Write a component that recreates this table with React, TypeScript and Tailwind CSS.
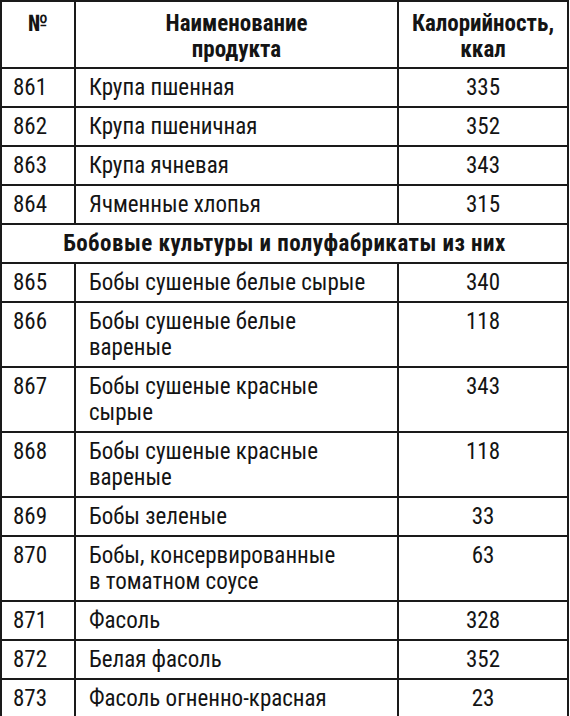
import React from "react";

type Row = { n: string; name: React.ReactNode; kcal: string } | { section: string };

const rows: Row[] = [
  { n: "861", name: "Крупа пшенная", kcal: "335" },
  { n: "862", name: "Крупа пшеничная", kcal: "352" },
  { n: "863", name: "Крупа ячневая", kcal: "343" },
  { n: "864", name: "Ячменные хлопья", kcal: "315" },
  { section: "Бобовые культуры и полуфабрикаты из них" },
  { n: "865", name: "Бобы сушеные белые сырые", kcal: "340" },
  { n: "866", name: <>Бобы сушеные белые<br />вареные</>, kcal: "118" },
  { n: "867", name: <>Бобы сушеные красные<br />сырые</>, kcal: "343" },
  { n: "868", name: <>Бобы сушеные красные<br />вареные</>, kcal: "118" },
  { n: "869", name: "Бобы зеленые", kcal: "33" },
  { n: "870", name: <>Бобы, консервированные<br />в томатном соусе</>, kcal: "63" },
  { n: "871", name: "Фасоль", kcal: "328" },
  { n: "872", name: "Белая фасоль", kcal: "352" },
  { n: "873", name: "Фасоль огненно-красная", kcal: "23" },
];

export default function App() {
  return (
    <div
      className="w-[570px] h-[716px] overflow-hidden bg-white text-[#141414]"
      style={{ fontFamily: '"Liberation Sans Narrow", "Roboto Condensed", "Arial Narrow", "Liberation Sans", sans-serif' }}
    >
      <table className="w-[569px] border-collapse border-2 border-[#1a1a1a] text-[23px] leading-[26px]">
        <colgroup>
          <col className="w-[74px]" />
          <col className="w-[323px]" />
          <col />
        </colgroup>
        <thead>
          <tr>
            <th className="border-2 border-[#1a1a1a] align-top pt-[9px] pb-[4px] font-bold text-[23px]">№</th>
            <th className="border-2 border-[#1a1a1a] align-top pt-[9px] pb-[4px] font-bold text-[23px]">
              Наименование<br />продукта
            </th>
            <th className="border-2 border-[#1a1a1a] align-top pt-[9px] pb-[4px] font-bold text-[23px]">
              Калорийность,<br />ккал
            </th>
          </tr>
        </thead>
        <tbody>
          {rows.map((r, i) =>
            "section" in r ? (
              <tr key={i}>
                <td colSpan={3} className="border-2 border-[#1a1a1a] text-center font-bold text-[23px] tracking-[0.02em] pt-[6px] pb-[5px]">
                  {r.section}
                </td>
              </tr>
            ) : (
              <tr key={i}>
                <td className="border-2 border-[#1a1a1a] align-top pl-[11px] pt-[6px] pb-[5px]">{r.n}</td>
                <td className="border-2 border-[#1a1a1a] align-top pl-[13px] pt-[6px] pb-[5px]">{r.name}</td>
                <td className="border-2 border-[#1a1a1a] align-top text-center pt-[6px] pb-[5px]">{r.kcal}</td>
              </tr>
            )
          )}
        </tbody>
      </table>
    </div>
  );
}
